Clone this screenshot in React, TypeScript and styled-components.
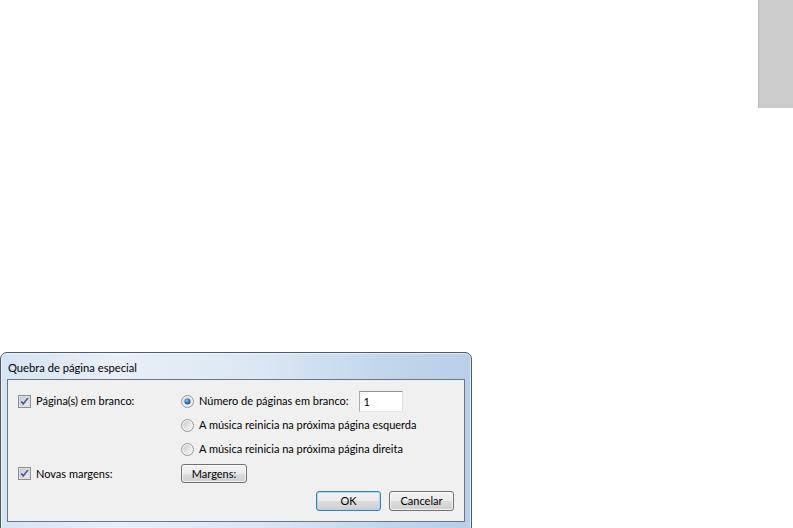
import React from "react";
import styled, { createGlobalStyle } from "styled-components";

const Global = createGlobalStyle`
  html, body { margin: 0; padding: 0; background: #ffffff; }
  * { box-sizing: border-box; }
`;

const Page = styled.div`
  width: 793px;
  height: 528px;
  overflow: hidden;
  background: #ffffff;
  display: flex;
  flex-direction: column;
  font-family: Lato, "Open Sans", sans-serif;
  font-size: 11px;
  color: #000;
`;

const TopArea = styled.div`
  height: 352px;
  flex-shrink: 0;
  display: flex;
  justify-content: flex-end;
  align-items: flex-start;
`;

const GrayBlock = styled.div`
  width: 35px;
  height: 108px;
  background: #cccccc;
  border-left: 1px solid #bdbdbd;
`;

const Dialog = styled.div`
  width: 472px;
  height: 182px;
  flex-shrink: 0;
  border: 1px solid #4d5866;
  border-radius: 7px 7px 0 0;
  background: linear-gradient(to right, #d6e4f3 0%, #e8eff8 25%, #dbe7f4 55%, #c3d7ec 80%, #b8cfe8 100%);
  padding: 0 6px 6px 6px;
  display: flex;
  flex-direction: column;
  box-shadow: inset 0 0 0 1px rgba(255, 255, 255, 0.6);
`;

const TitleBar = styled.div`
  height: 26px;
  display: flex;
  align-items: center;
  padding-left: 1px;
  padding-top: 2px;
  font-size: 11.2px;
  color: #000;
`;

const Client = styled.div`
  height: 143px;
  border: 1px solid #6a7686;
  background: #f0f0f0;
  padding: 9px 10px 0 10px;
  display: flex;
  flex-direction: column;
`;

const Grid = styled.div`
  display: grid;
  grid-template-columns: 163px 1fr;
  grid-template-rows: 24px 24px 24px 25px;
  align-items: center;
`;

const Cell = styled.div<{ $row: number; $col: number }>`
  grid-row: ${(p) => p.$row};
  grid-column: ${(p) => p.$col};
  display: flex;
  align-items: center;
  gap: 5px;
`;

const Label = styled.span`
  white-space: nowrap;
  line-height: 14px;
`;

const BoxWrap = styled.span`
  width: 13px;
  height: 13px;
  flex-shrink: 0;
  display: inline-flex;
`;

const TextInput = styled.div`
  width: 44px;
  height: 21px;
  margin-left: 5px;
  border: 1px solid #abadb3;
  border-top-color: #8f949c;
  border-right-color: #dbdfe6;
  border-bottom-color: #e3e9ef;
  background: #ffffff;
  padding-left: 4px;
  display: flex;
  align-items: center;
`;

const ButtonRow = styled.div`
  margin-top: 5px;
  display: flex;
  justify-content: flex-end;
  gap: 8px;
`;

const Button = styled.div<{ $default?: boolean; $width: number; $height: number }>`
  width: ${(p) => p.$width}px;
  height: ${(p) => p.$height}px;
  border: 1px solid ${(p) => (p.$default ? "#3c7fb1" : "#707070")};
  border-radius: 3px;
  background: linear-gradient(to bottom, #f2f2f2 0%, #ebebeb 50%, #dddddd 50%, #cfcfcf 100%);
  box-shadow: inset 0 0 0 1px ${(p) => (p.$default ? "#a7d8f3" : "rgba(255,255,255,0.7)")};
  display: flex;
  align-items: center;
  justify-content: center;
  line-height: 14px;
`;

const Checkbox = () => (
  <BoxWrap>
    <svg width="13" height="13" viewBox="0 0 13 13">
      <defs>
        <linearGradient id="cbg" x1="0" y1="0" x2="1" y2="1">
          <stop offset="0" stopColor="#cbcfd5" />
          <stop offset="1" stopColor="#f6f6f6" />
        </linearGradient>
      </defs>
      <rect x="0.5" y="0.5" width="12" height="12" fill="#f4f4f4" stroke="#8e8f8f" />
      <rect x="2" y="2" width="9" height="9" fill="url(#cbg)" stroke="#aeb3b9" strokeWidth="0.6" />
      <path d="M3.2 6.4 L5.3 8.9 L9.8 3.2" fill="none" stroke="#4a5f97" strokeWidth="1.7" />
    </svg>
  </BoxWrap>
);

const Radio = ({ on }: { on?: boolean }) => (
  <BoxWrap>
    <svg width="13" height="13" viewBox="0 0 13 13">
      <defs>
        <linearGradient id="rbg" x1="0" y1="0" x2="1" y2="1">
          <stop offset="0" stopColor="#c9ccd1" />
          <stop offset="1" stopColor="#f7f7f7" />
        </linearGradient>
        <radialGradient id="rdot" cx="0.4" cy="0.35" r="0.7">
          <stop offset="0" stopColor="#8fcbef" />
          <stop offset="0.5" stopColor="#2a7cc0" />
          <stop offset="1" stopColor="#154a78" />
        </radialGradient>
      </defs>
      <circle cx="6.5" cy="6.5" r="6" fill="#f2f2f2" stroke="#969696" />
      <circle cx="6.5" cy="6.5" r="4.3" fill="url(#rbg)" />
      {on && <circle cx="6.5" cy="6.5" r="3" fill="url(#rdot)" />}
    </svg>
  </BoxWrap>
);

export default function App() {
  return (
    <Page>
      <Global />
      <TopArea>
        <GrayBlock />
      </TopArea>
      <Dialog>
        <TitleBar>Quebra de página especial</TitleBar>
        <Client>
          <Grid>
            <Cell $row={1} $col={1}>
              <Checkbox />
              <Label>Página(s) em branco:</Label>
            </Cell>
            <Cell $row={1} $col={2}>
              <Radio on />
              <Label>Número de páginas em branco:</Label>
              <TextInput>1</TextInput>
            </Cell>
            <Cell $row={2} $col={2}>
              <Radio />
              <Label>A música reinicia na próxima página esquerda</Label>
            </Cell>
            <Cell $row={3} $col={2}>
              <Radio />
              <Label>A música reinicia na próxima página direita</Label>
            </Cell>
            <Cell $row={4} $col={1}>
              <Checkbox />
              <Label>Novas margens:</Label>
            </Cell>
            <Cell $row={4} $col={2}>
              <Button $width={66} $height={19}>Margens:</Button>
            </Cell>
          </Grid>
          <ButtonRow>
            <Button $default $width={65} $height={20}>OK</Button>
            <Button $width={65} $height={20}>Cancelar</Button>
          </ButtonRow>
        </Client>
      </Dialog>
    </Page>
  );
}
